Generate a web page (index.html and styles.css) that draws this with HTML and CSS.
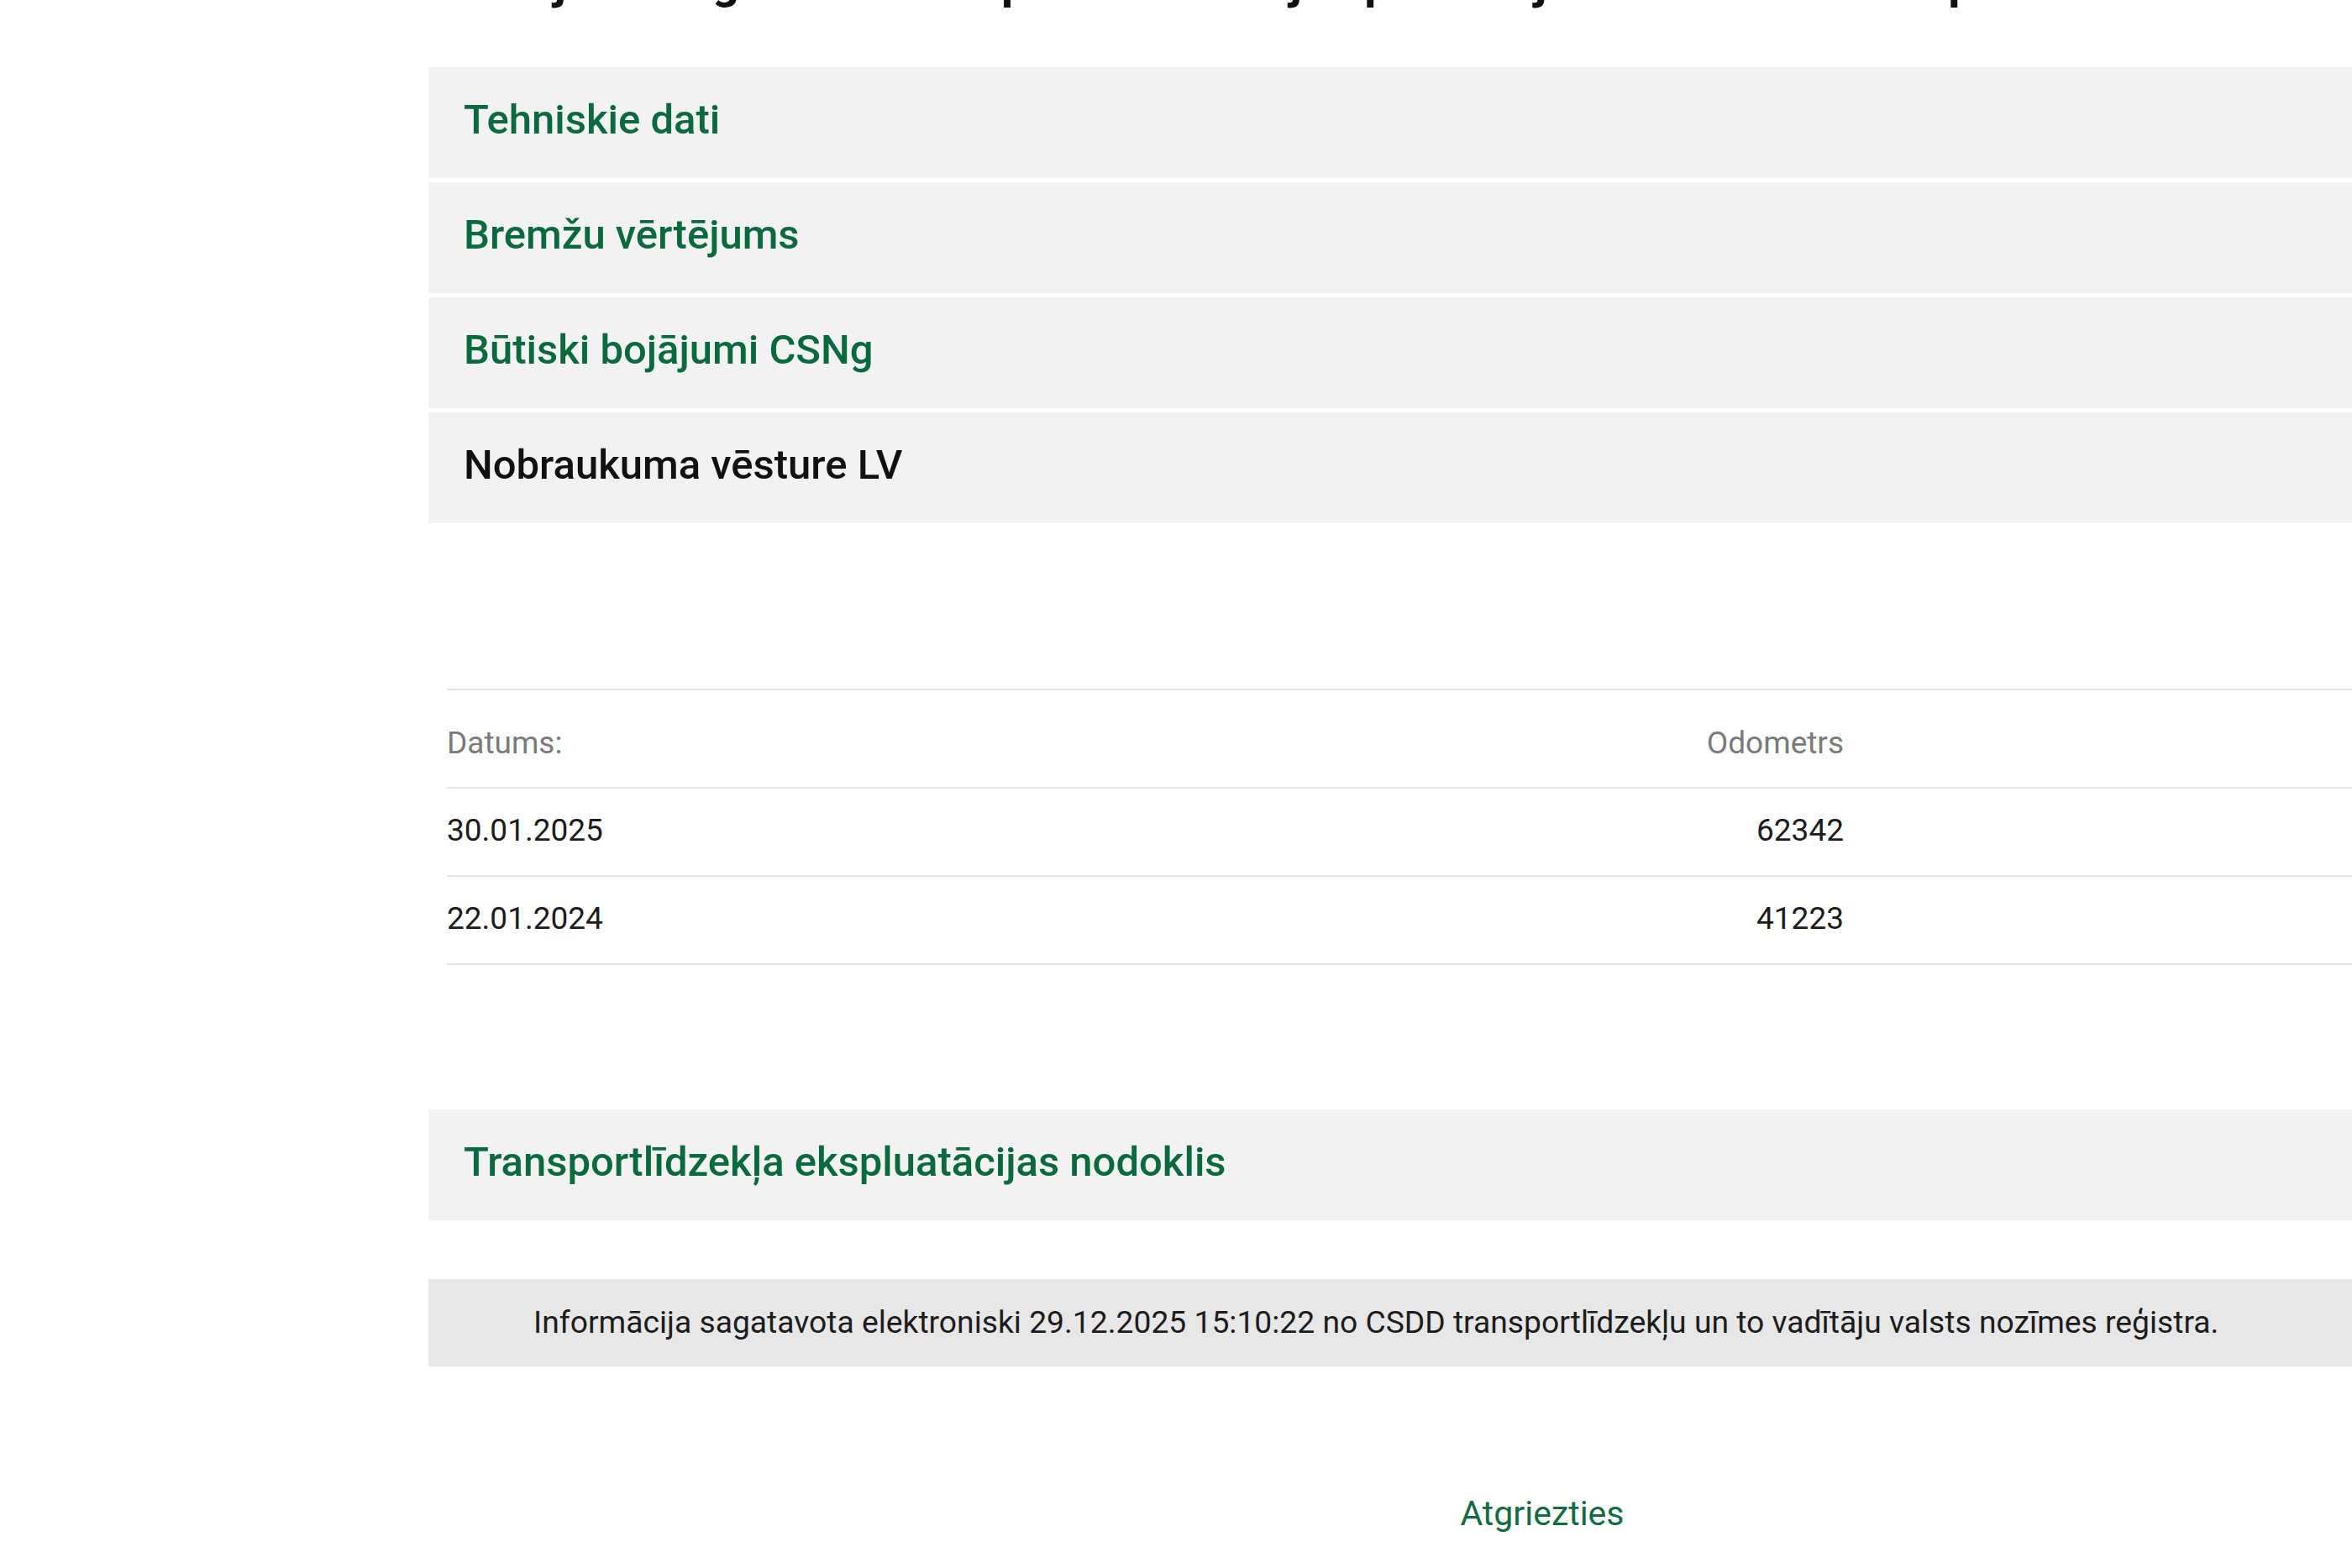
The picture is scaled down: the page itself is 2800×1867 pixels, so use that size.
FILE: index.html
```html
<!DOCTYPE html>
<html lang="lv">
<head>
<meta charset="utf-8">
<title>Nobraukuma vēsture</title>
<link rel="stylesheet" href="styles.css">
</head>
<body>
<div class="page">
  <h1 class="title">Ražojuma reģistrā dati un pārbaudes ar jūs pamata jomā tehniskie dati pēc</h1>

  <div class="acc">
    <div class="acc-head">Tehniskie dati</div>
    <div class="acc-head">Bremžu vērtējums</div>
    <div class="acc-head">Būtiski bojājumi CSNg</div>
    <div class="acc-head active">Nobraukuma vēsture LV</div>
  </div>

  <div class="mileage">
    <table class="odo">
      <colgroup>
        <col class="c-date">
        <col class="c-odo">
        <col class="c-rest">
      </colgroup>
      <thead>
        <tr><th class="t-left">Datums:</th><th class="t-right">Odometrs</th><th></th></tr>
      </thead>
      <tbody>
        <tr><td class="t-left">30.01.2025</td><td class="t-right">62342</td><td></td></tr>
        <tr><td class="t-left">22.01.2024</td><td class="t-right">41223</td><td></td></tr>
      </tbody>
    </table>
  </div>

  <div class="acc-head tax">Transportlīdzekļa ekspluatācijas nodoklis</div>

  <div class="info">Informācija sagatavota elektroniski 29.12.2025 15:10:22 no CSDD transportlīdzekļu un to vadītāju valsts nozīmes reģistra.</div>

  <div class="back-row"><a class="back" href="#">Atgriezties</a></div>
</div>
</body>
</html>
```

FILE: styles.css
```css
html, body {
  margin: 0;
  padding: 0;
  background: #ffffff;
  overflow: hidden;
}

body {
  font-family: Roboto, "Liberation Sans", Arial, sans-serif;
  color: #1c1c1c;
}

.page {
  margin-left: 510px;
  width: 2652px;
}

.title {
  margin: -54px 0 68px 24px;
  font-size: 56px;
  line-height: 66px;
  font-weight: 700;
  color: #111;
  white-space: nowrap;
}

.acc {
  display: flex;
  flex-direction: column;
  gap: 5px;
}

.acc-head {
  height: 132px;
  box-sizing: border-box;
  padding: 34px 42px 0;
  background: #f2f2f2;
  color: #0b6a3d;
  font-size: 49px;
  line-height: 57px;
  font-weight: 500;
}

.acc-head.active {
  color: #111111;
}

.mileage {
  padding: 197px 0 172px 22px;
}

.odo {
  width: 100%;
  table-layout: fixed;
  border-collapse: collapse;
  font-size: 37px;
  line-height: 43px;
}

.c-date { width: 1300px; }
.c-odo { width: 363px; }

.odo thead tr {
  border-top: 2px solid #e4e4e4;
}

.odo tr {
  border-bottom: 2px solid #e4e4e4;
}

.odo th {
  height: 117px;
  box-sizing: border-box;
  padding: 0 0 31px;
  vertical-align: bottom;
  font-weight: 400;
  color: #7a7a7a;
}

.odo td {
  height: 103px;
  box-sizing: border-box;
  padding: 28px 0 32px;
  vertical-align: top;
  color: #1c1c1c;
}

.t-left { text-align: left; }
.t-right { text-align: right; }

.tax {
  margin-bottom: 70px;
}

.info {
  height: 104px;
  box-sizing: border-box;
  padding: 30px 0 0 125px;
  background: #e7e7e7;
  font-size: 37.25px;
  line-height: 43px;
  color: #1c1c1c;
  white-space: nowrap;
}

.back-row {
  padding-top: 151px;
  text-align: center;
}

.back {
  font-size: 41px;
  line-height: 48px;
  color: #136b42;
  text-decoration: none;
}
```
